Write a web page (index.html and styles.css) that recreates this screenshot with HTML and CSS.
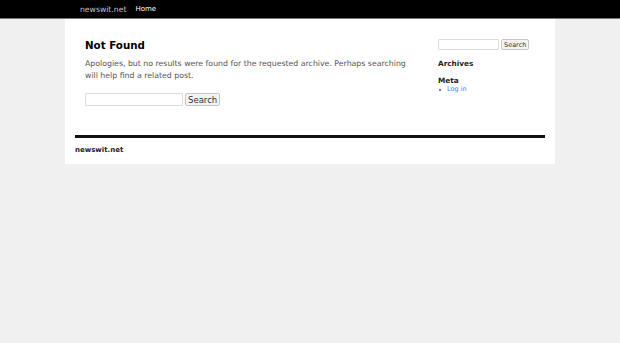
FILE: index.html
```html
<!DOCTYPE html>
<html lang="en">
<head>
    <meta charset="UTF-8">
    <title>newswit.net</title>
    <link rel="stylesheet" href="styles.css">
</head>
<body>
    <div class="topbar">
        <div class="topbar-inner">
            <a class="brand" href="#">newswit.net</a>
            <a class="nav-link" href="#">Home</a>
        </div>
    </div>

    <div class="page">
        <div class="columns">
            <div class="main">
                <h1>Not Found</h1>
                <p>Apologies, but no results were found for the requested archive. Perhaps searching will help find a related post.</p>
                <form class="search main-search">
                    <input type="text" class="search-field">
                    <button type="button" class="search-btn">Search</button>
                </form>
            </div>

            <div class="sidebar">
                <form class="search side-search">
                    <input type="text" class="search-field">
                    <button type="button" class="search-btn">Search</button>
                </form>
                <h3>Archives</h3>
                <h3>Meta</h3>
                <ul>
                    <li><a href="#">Log in</a></li>
                </ul>
            </div>
        </div>

        <div class="footer">newswit.net</div>
    </div>
</body>
</html>
```

FILE: styles.css
```css
body {
    font-family: 'DejaVu Sans', sans-serif;
    background-color: #f0f0f0;
    margin: 0;
    padding: 0;
    color: #333;
}

a {
    text-decoration: none;
}

.topbar {
    background-color: #000000;
    height: 18px;
    border-bottom: 1px solid #7a7a7a;
}

.topbar-inner {
    display: flex;
    align-items: center;
    height: 18px;
    padding-left: 80px;
    gap: 9px;
}

.brand {
    color: #c4c4c4;
    font-size: 7.7px;
}

.nav-link {
    color: #ffffff;
    font-size: 7px;
}

.page {
    width: 470px;
    margin: 0 auto;
    background-color: #ffffff;
    padding: 0 10px 10px;
}

.columns {
    display: flex;
    padding: 19px 10px 29px;
}

.main {
    width: 353px;
    flex-shrink: 0;
    padding-top: 1px;
}

h1 {
    font-size: 10.3px;
    color: #000;
    margin: 0 0 7px;
}

.main p {
    font-size: 7.8px;
    line-height: 11.5px;
    color: #555;
    margin: 0 0 12px;
    width: 330px;
}

.search {
    display: flex;
    align-items: center;
    gap: 2px;
    margin: 0;
}

.search-field {
    box-sizing: border-box;
    border: 1px solid #dddddd;
    border-radius: 1px;
    background: #fff;
    padding: 0;
}

.search-btn {
    box-sizing: border-box;
    border: 1px solid #c8c8c8;
    border-radius: 2px;
    background: #f3f3f3;
    color: #333;
    font-family: 'DejaVu Sans', sans-serif;
    padding: 0 2px;
}

.main-search .search-field {
    width: 98px;
    height: 13px;
}

.main-search .search-btn {
    width: 35px;
    height: 13px;
    font-size: 8.5px;
}

.side-search .search-field {
    width: 61px;
    height: 11px;
}

.side-search .search-btn {
    width: 28px;
    height: 11px;
    font-size: 6.5px;
}

.sidebar {
    padding-top: 1px;
    width: 97px;
    flex-shrink: 0;
}

.sidebar h3 {
    font-size: 7.3px;
    color: #222;
    margin: 9px 0 0;
}

.sidebar h3 + h3 {
    margin-top: 8px;
}

.sidebar ul {
    margin: 0;
    padding-left: 1px;
    list-style-position: inside;
    font-size: 6.5px;
    color: #555;
}

.sidebar ul li::marker {
    font-size: 5px;
}

.sidebar ul a {
    color: #2f86dd;
}

.footer {
    border-top: 3px solid #111;
    padding-top: 8px;
    font-size: 7px;
    font-weight: bold;
    color: #222;
}
```
